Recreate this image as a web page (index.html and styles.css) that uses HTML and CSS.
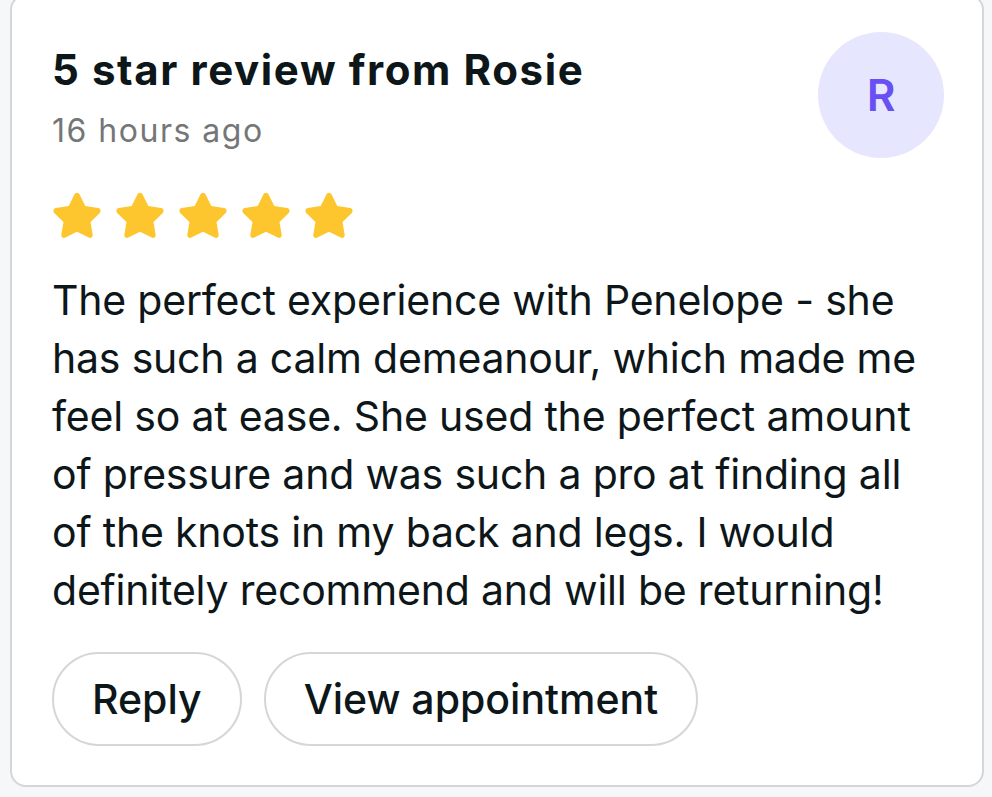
FILE: index.html
```html
<!DOCTYPE html>
<html lang="en">
<head>
<meta charset="utf-8">
<title>Review</title>
<link rel="stylesheet" href="styles.css">
</head>
<body>
<div class="card">
  <div class="header">
    <div class="heading">
      <h1 class="title">5 star review from Rosie</h1>
      <div class="time">16 hours ago</div>
    </div>
    <div class="avatar">R</div>
  </div>
  <div class="stars">
    <svg class="star" viewBox="1.9 1.9 20.2 20.2"><path d="M12 2.2c.5 0 .9.3 1.1.7l2.4 4.9 5.4.8c1 .1 1.4 1.4.7 2.1l-3.9 3.8.9 5.4c.2 1-.9 1.7-1.7 1.2L12 18.6l-4.9 2.5c-.9.5-1.9-.3-1.7-1.2l.9-5.4-3.9-3.8c-.7-.7-.3-2 .7-2.1l5.4-.8 2.4-4.9c.2-.4.6-.7 1.1-.7z"/></svg>
    <svg class="star" viewBox="1.9 1.9 20.2 20.2"><path d="M12 2.2c.5 0 .9.3 1.1.7l2.4 4.9 5.4.8c1 .1 1.4 1.4.7 2.1l-3.9 3.8.9 5.4c.2 1-.9 1.7-1.7 1.2L12 18.6l-4.9 2.5c-.9.5-1.9-.3-1.7-1.2l.9-5.4-3.9-3.8c-.7-.7-.3-2 .7-2.1l5.4-.8 2.4-4.9c.2-.4.6-.7 1.1-.7z"/></svg>
    <svg class="star" viewBox="1.9 1.9 20.2 20.2"><path d="M12 2.2c.5 0 .9.3 1.1.7l2.4 4.9 5.4.8c1 .1 1.4 1.4.7 2.1l-3.9 3.8.9 5.4c.2 1-.9 1.7-1.7 1.2L12 18.6l-4.9 2.5c-.9.5-1.9-.3-1.7-1.2l.9-5.4-3.9-3.8c-.7-.7-.3-2 .7-2.1l5.4-.8 2.4-4.9c.2-.4.6-.7 1.1-.7z"/></svg>
    <svg class="star" viewBox="1.9 1.9 20.2 20.2"><path d="M12 2.2c.5 0 .9.3 1.1.7l2.4 4.9 5.4.8c1 .1 1.4 1.4.7 2.1l-3.9 3.8.9 5.4c.2 1-.9 1.7-1.7 1.2L12 18.6l-4.9 2.5c-.9.5-1.9-.3-1.7-1.2l.9-5.4-3.9-3.8c-.7-.7-.3-2 .7-2.1l5.4-.8 2.4-4.9c.2-.4.6-.7 1.1-.7z"/></svg>
    <svg class="star" viewBox="1.9 1.9 20.2 20.2"><path d="M12 2.2c.5 0 .9.3 1.1.7l2.4 4.9 5.4.8c1 .1 1.4 1.4.7 2.1l-3.9 3.8.9 5.4c.2 1-.9 1.7-1.7 1.2L12 18.6l-4.9 2.5c-.9.5-1.9-.3-1.7-1.2l.9-5.4-3.9-3.8c-.7-.7-.3-2 .7-2.1l5.4-.8 2.4-4.9c.2-.4.6-.7 1.1-.7z"/></svg>
  </div>
  <p class="review">The perfect experience with Penelope - she has such a calm demeanour, which made me feel so at ease. She used the perfect amount of pressure and was such a pro at finding all of the knots in my back and legs. I would definitely recommend and will be returning!</p>
  <div class="actions">
    <button class="btn">Reply</button>
    <button class="btn">View appointment</button>
  </div>
</div>
</body>
</html>
```

FILE: styles.css
```css
html, body {
  margin: 0;
  padding: 0;
  background: #f6f7f9;
  font-family: "Inter", "Noto Sans", sans-serif;
}
body {
  height: 797px;
  overflow: hidden;
}
.card {
  margin: -6px 8px 0 10px;
  background: #ffffff;
  border: 2px solid #d5d6d8;
  border-radius: 16px;
  padding: 34px 38px 0 40px;
  box-sizing: border-box;
  height: 793px;
}
.header {
  display: flex;
  justify-content: space-between;
  align-items: flex-start;
}
.title {
  margin: 14px 0 0 0;
  font-size: 42px;
  line-height: 52px;
  font-weight: 700;
  color: #0d1619;
  letter-spacing: 1.6px;
}
.time {
  margin-top: 15px;
  font-size: 32px;
  line-height: 40px;
  color: #757676;
  letter-spacing: 1.5px;
}
.avatar {
  width: 126px;
  height: 126px;
  border-radius: 50%;
  background: #e6e6ff;
  color: #6950f3;
  font-size: 44px;
  font-weight: 600;
  display: flex;
  align-items: center;
  justify-content: center;
  margin-top: 2px;
  flex-shrink: 0;
}
.stars {
  display: flex;
  gap: 15px;
  margin-top: 34px;
  padding-left: 1px;
}
.star {
  width: 48px;
  height: 48px;
  fill: #fec62e;
}
.review {
  margin: 31px 0 0 0;
  font-size: 41px;
  line-height: 58px;
  color: #0d1619;
  letter-spacing: -0.2px;
}
.actions {
  display: flex;
  gap: 22px;
  margin-top: 33px;
}
.btn {
  font-family: inherit;
  font-size: 41px;
  font-weight: 500;
  color: #0d1619;
  background: #ffffff;
  border: 2px solid #d5d6d8;
  border-radius: 47px;
  height: 94px;
  padding: 0 38px;
}
```
